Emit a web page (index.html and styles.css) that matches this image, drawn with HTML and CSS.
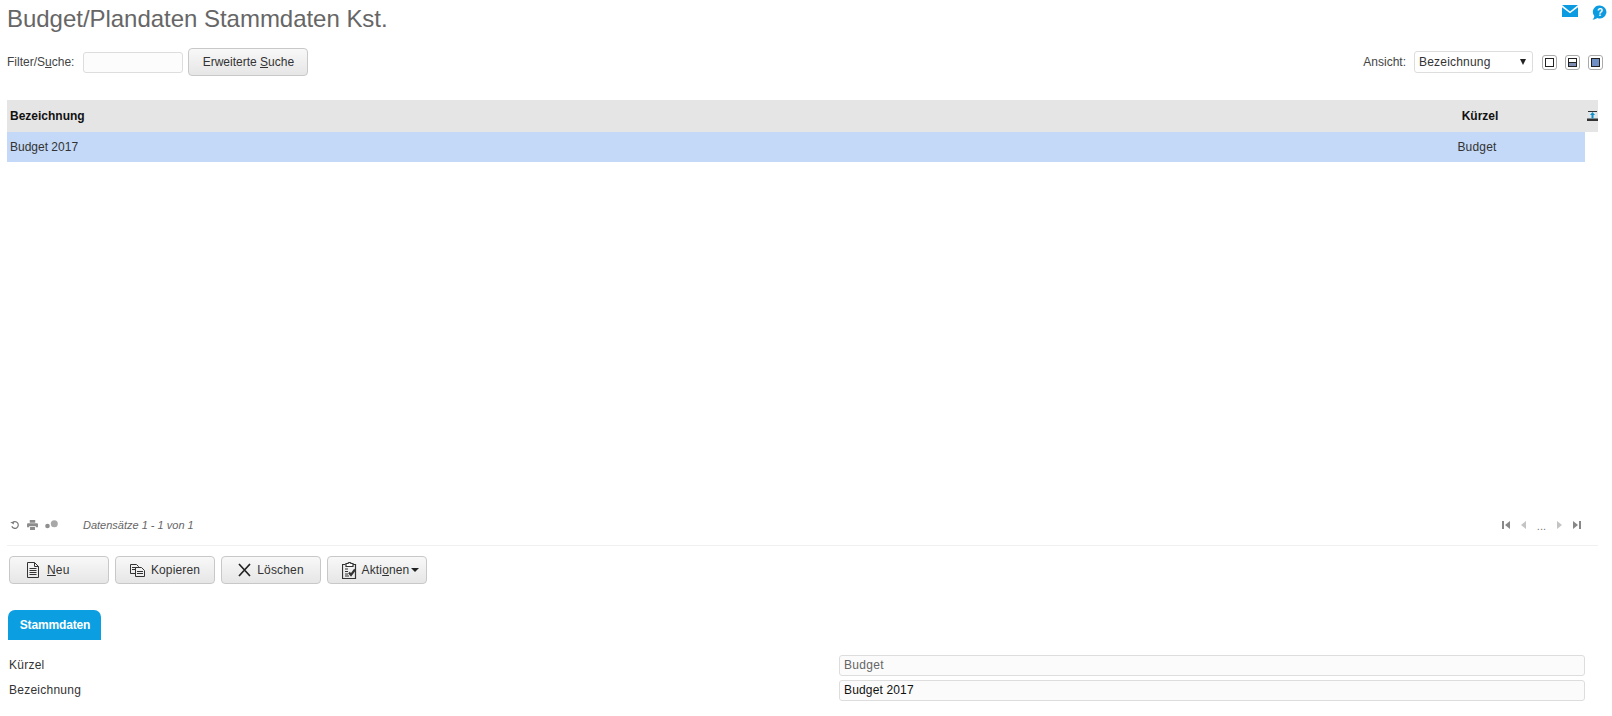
FILE: index.html
```html
<!DOCTYPE html>
<html lang="de">
<head>
<meta charset="utf-8">
<title>Budget/Plandaten Stammdaten Kst.</title>
<link rel="stylesheet" href="styles.css">
</head>
<body>
<div class="page">
  <header class="head">
    <h1 class="title">Budget/Plandaten Stammdaten Kst.</h1>
    <div class="top-icons">
      <svg width="16" height="12" viewBox="0 0 16 12"><path class="sky" d="M0 0h16L8 6.500z"/><path class="sky" d="M0 2.200l8 6 8-6V12H0z"/></svg>
      <svg width="15" height="15" viewBox="0 0 15 15"><path class="sky" d="M8 0.500a6.500 6.500 0 1 1-2.600 12.500C4 14 2 14.700 0.500 14.500 1.800 13.500 2.200 12.300 2.300 11A6.500 6.500 0 0 1 8 0.500z"/><text x="8" y="10.500" class="qm">?</text></svg>
    </div>
  </header>

  <div class="toolbar">
    <div class="filter">
      <label class="lbl">Filter/S<u>u</u>che:</label>
      <span class="search-input"></span>
      <button class="btn btn-search">Erweiterte <u>S</u>uche</button>
    </div>
    <div class="view">
      <label class="lbl">Ansicht:</label>
      <span class="select"><span>Bezeichnung</span><i class="select-caret"></i></span>
      <span class="layout-ico"><i class="pane"></i></span>
      <span class="layout-ico"><i class="pane half"></i></span>
      <span class="layout-ico"><i class="pane full"></i></span>
    </div>
  </div>

  <section class="grid">
    <div class="grid-head">
      <div class="col-name">Bezeichnung</div>
      <div class="col-short">Kürzel</div>
      <svg class="col-ico" width="11" height="10" viewBox="0 0 11 10"><path fill="#dfe6ea" d="M1 0h9v8H1z"/><path fill="#333" d="M1 0h9v1H1zM0 7.500h11V10H0z"/><path fill="#0f8fc9" d="M5.500 1l2.500 3H6.500v3.500h-2V4H3z"/></svg>
    </div>
    <div class="grid-row">
      <div class="col-name">Budget 2017</div>
      <div class="col-short">Budget</div>
    </div>
  </section>

  <div class="pager">
    <div class="pager-left">
      <svg width="10" height="10" viewBox="0 0 12 12" fill="none"><path d="M3 3.300A4 4 0 1 1 2.200 7.500" stroke="#777" stroke-width="1.400"/><path d="M0.500 2.500h4v3.500z" fill="#777" transform="rotate(-10 2 4)"/></svg>
      <svg width="11" height="10" viewBox="0 0 12 11"><path fill="#8c8c8c" d="M3 0h6v3H3zM1 3.500h10a1 1 0 0 1 1 1V8H9.500V6.500h-7V8H0V4.500a1 1 0 0 1 1-1zM3.300 7.300h5.400V11H3.300z"/></svg>
      <svg width="13" height="10" viewBox="0 0 13 10"><circle cx="2.500" cy="6" r="2.300" fill="#8f8f8f"/><circle cx="9.300" cy="3.700" r="3.500" fill="#a8a8a8"/></svg>
      <span class="records">Datensätze 1 - 1 von 1</span>
    </div>
    <div class="pager-right">
      <svg width="8" height="8" viewBox="0 0 8 8"><path fill="#888" d="M0 0h2v8H0zM8 0v8L3 4z"/></svg>
      <svg width="5" height="8" viewBox="0 0 5 8"><path fill="#c4c4c4" d="M5 0v8L0 4z"/></svg>
      <span class="dots">...</span>
      <svg width="5" height="8" viewBox="0 0 5 8"><path fill="#c4c4c4" d="M0 0v8l5-4z"/></svg>
      <svg width="8" height="8" viewBox="0 0 8 8"><path fill="#888" d="M0 0v8l5-4zM6 0h2v8H6z"/></svg>
    </div>
  </div>

  <div class="actions">
    <button class="btn btn-act btn-neu">
      <svg width="12" height="16" viewBox="0 0 12 16" fill="none" stroke="#333"><path d="M0.500 0.500h7l4 4v11h-11z"/><path d="M7.500 0.500v4h4M2.500 6.500h7M2.500 8.500h7M2.500 10.500h7M2.500 12.500h7"/></svg>
      <span><u>N</u>eu</span>
    </button>
    <button class="btn btn-act">
      <svg width="15" height="13" viewBox="0 0 15 13" fill="none" stroke="#333"><path d="M0.500 0.500h6l2 2v7h-8zM2 3.500h5M2 5.500h5"/><path fill="#f0f0f0" d="M5.500 3.500h6l3 3v6h-9z"/><path d="M7 7.500h6M7 9.500h6"/></svg>
      <span>Kopieren</span>
    </button>
    <button class="btn btn-act">
      <svg width="13" height="14" viewBox="0 0 13 14" fill="none" stroke="#222" stroke-width="1.700"><path d="M1 1l11 12M12 1L1 13"/></svg>
      <span>Löschen</span>
    </button>
    <button class="btn btn-act btn-tight">
      <svg width="15" height="17" viewBox="0 0 15 17" fill="none" stroke="#333" stroke-width="1.200"><path d="M3.500 2.500h-3v14h13v-14h-3"/><path fill="#fff" d="M4 1.500h2a1.500 1 0 0 1 3 0h2v3H4z"/><path d="M3 7h3M3 9.500h3M3 12h3M3 14h4"/><path stroke-width="2.200" d="M7 10.500l2 2.500 4-5.500"/></svg>
      <span>Akti<u>o</u>nen</span><i class="caret"></i>
    </button>
  </div>

  <nav class="tabs"><span class="tab">Stammdaten</span></nav>

  <form class="form">
    <div class="form-row">
      <label class="form-lbl">Kürzel</label>
      <span class="field readonly">Budget</span>
    </div>
    <div class="form-row">
      <label class="form-lbl">Bezeichnung</label>
      <span class="field">Budget 2017</span>
    </div>
  </form>
</div>
</body>
</html>
```

FILE: styles.css
```css
* { box-sizing: border-box; }
html, body { margin: 0; padding: 0; background: #fff; }
body { font-family: "Liberation Sans", Arial, sans-serif; font-size: 12px; color: #333; height: 716px; overflow: hidden; }
.page { padding: 0 14px 0 7px; }

.head { height: 48px; display: flex; justify-content: space-between; align-items: flex-start; }
.title { margin: 0; padding-top: 3px; font-size: 24px; font-weight: 400; line-height: 32px; color: #666; letter-spacing: -0.03px; }
.top-icons { display: flex; gap: 14px; align-items: flex-start; padding-top: 5px; margin-right: -9px; }
.sky { fill: #0c9be0; }
.qm { fill: #fff; font-size: 10px; font-weight: 700; text-anchor: middle; font-family: "Liberation Sans", sans-serif; }

.toolbar { height: 28px; display: flex; justify-content: space-between; align-items: center; }
.filter, .view { display: flex; align-items: center; }
.lbl { color: #444; }
.search-input { width: 100px; height: 21px; margin-left: 9px; border: 1px solid #ddd; border-radius: 3px; background: #fcfcfc; }
.btn { font: inherit; color: #333; height: 28px; border: 1px solid #c8c8c8; border-radius: 4px; background: linear-gradient(#f8f8f8, #e6e6e6); padding: 0; }
.btn-search { width: 120px; margin-left: 5px; }

.view { margin-right: -5px; }
.select { width: 119px; height: 22px; margin-left: 8px; padding: 0 5px 0 4px; border: 1px solid #ddd; border-radius: 3px; display: flex; justify-content: space-between; align-items: center; letter-spacing: 0.2px; color: #333; }
.select-caret { width: 0; height: 0; border-left: 3px solid transparent; border-right: 3px solid transparent; border-top: 6px solid #222; margin-right: 1px; }
.layout-ico { width: 15px; height: 15px; margin-left: 8px; border: 1px solid #aaa; border-radius: 3px; padding: 2px; display: block; }
.select + .layout-ico { margin-left: 9px; }
.pane { display: block; width: 100%; height: 100%; border: 1px solid #222; background: #fff; }
.pane.half { background: linear-gradient(#fff 45%, #222 45%, #222 55%, #7f8eb5 55%); }
.pane.full { background: #6f8fc4; }

.grid { margin-top: 24px; height: 416px; }
.grid-head { width: 1591px; height: 32px; background: #e5e5e5; display: flex; align-items: center; font-weight: 700; color: #111; position: relative; }
.grid-row { width: 1578px; height: 30px; background: #c3d9f7; display: flex; align-items: center; color: #333; }
.col-name { flex: 1; padding-left: 3px; }
.col-short { width: 120px; text-align: center; margin-right: 48px; letter-spacing: 0.2px; }
.grid-head .col-short { margin-right: 58px; letter-spacing: 0; }
.col-ico { position: absolute; right: 0; top: 11px; }

.pager { height: 30px; display: flex; justify-content: space-between; align-items: center; border-bottom: 1px solid #f0f0f0; padding: 0 0 11px 3px; }
.pager-left { display: flex; align-items: center; gap: 7px; }
.records { margin-left: 18px; font-size: 11px; font-style: italic; color: #666; }
.pager-right { display: flex; align-items: center; gap: 11px; margin-right: 17px; }
.dots { color: #777; font-size: 11px; padding-top: 2px; }

.actions { display: flex; gap: 6px; margin-top: 10px; padding-left: 2px; }
.btn-act { width: 100px; display: flex; align-items: center; justify-content: center; gap: 6px; letter-spacing: 0.15px; }
.btn-neu { justify-content: flex-start; padding-left: 17px; gap: 8px; }
.btn-tight { gap: 5px; padding-left: 7px; }
.caret { width: 0; height: 0; border-left: 4px solid transparent; border-right: 4px solid transparent; border-top: 4px solid #222; margin-left: -3px; }

.tabs { margin-top: 26px; padding-left: 1px; }
.tab { display: flex; width: 93px; height: 30px; align-items: center; justify-content: center; background: #0b9fe2; color: #fff; font-weight: 700; border-radius: 7px 7px 0 0; padding-left: 1px; letter-spacing: -0.15px; }

.form { margin-top: 15px; display: flex; flex-direction: column; gap: 4px; }
.form-row { display: flex; align-items: center; height: 21px; }
.form-lbl { width: 832px; padding: 0 0 2px 2px; color: #333; letter-spacing: 0.25px; }
.field { width: 746px; height: 21px; border: 1px solid #ddd; border-radius: 3px; background: #fbfbfb; padding-left: 4px; line-height: 19px; color: #111; letter-spacing: 0.15px; }
.field.readonly { color: #666; letter-spacing: 0.3px; }
```
